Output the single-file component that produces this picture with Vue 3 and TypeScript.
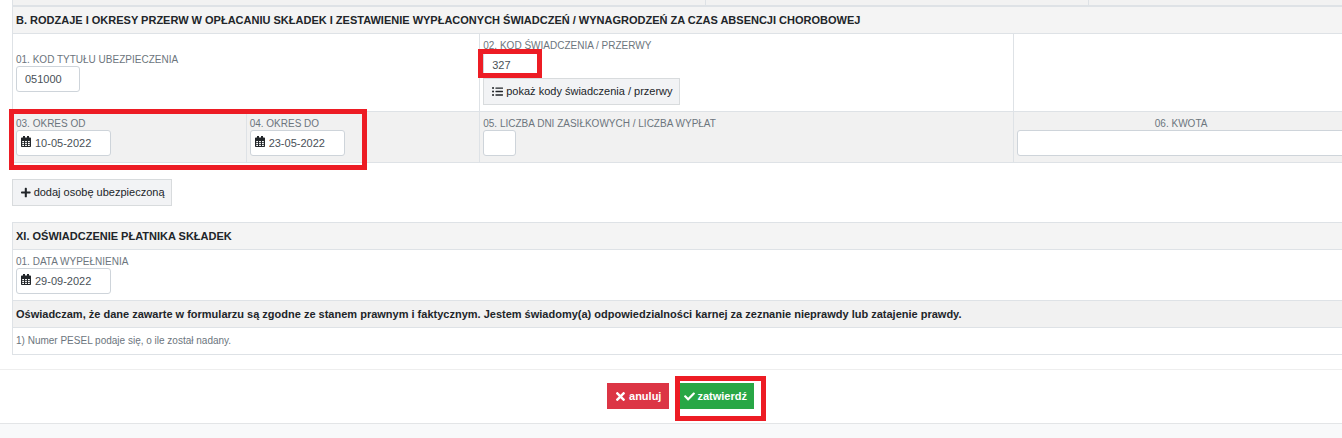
<script setup lang="ts">
import { ref } from 'vue'

const insuranceCode = ref('051000')
const benefitCode = ref('327')
const periodFrom = ref('10-05-2022')
const periodTo = ref('23-05-2022')
const dayCount = ref('')
const amount = ref('')
const filledOn = ref('29-09-2022')

const icons = {
  calendar:
    'M2 0h2v1.500h2V0h2v1.500h1.200a.8.8 0 0 1 .8.800V4H0V2.300a.8.8 0 0 1 .8-.800H2zM0 4h10v6.200a.8.8 0 0 1-.8.800H.8a.8.8 0 0 1-.8-.800zM1.200 5v1.300h1.800V5zM4.100 5v1.300h1.800V5zM7 5v1.300h1.800V5zM1.200 7v1.200h1.800V7zM4.100 7v1.200h1.800V7zM7 7v1.200h1.800V7zM1.200 9v1h1.800V9zM4.100 9v1h1.800V9zM7 9v1h1.800V9z',
  list:
    'M48 48a48 48 0 1 0 48 48 48 48 0 0 0-48-48zm0 160a48 48 0 1 0 48 48 48 48 0 0 0-48-48zm0 160a48 48 0 1 0 48 48 48 48 0 0 0-48-48zm448 16H176a16 16 0 0 0-16 16v32a16 16 0 0 0 16 16h320a16 16 0 0 0 16-16v-32a16 16 0 0 0-16-16zm0-320H176a16 16 0 0 0-16 16v32a16 16 0 0 0 16 16h320a16 16 0 0 0 16-16V80a16 16 0 0 0-16-16zm0 160H176a16 16 0 0 0-16 16v32a16 16 0 0 0 16 16h320a16 16 0 0 0 16-16v-32a16 16 0 0 0-16-16z',
  plus:
    'M416 208H272V64c0-17.670-14.330-32-32-32h-32c-17.670 0-32 14.330-32 32v144H32c-17.670 0-32 14.330-32 32v32c0 17.670 14.330 32 32 32h144v144c0 17.670 14.330 32 32 32h32c17.670 0 32-14.330 32-32V304h144c17.670 0 32-14.330 32-32v-32c0-17.670-14.330-32-32-32z',
  cross:
    'M242.720 256l100.070-100.070c12.280-12.280 12.280-32.190 0-44.480l-22.240-22.240c-12.280-12.280-32.190-12.280-44.480 0L176 189.280 75.930 89.210c-12.280-12.280-32.190-12.280-44.480 0L9.210 111.450c-12.280 12.280-12.280 32.190 0 44.480L109.280 256 9.210 356.070c-12.280 12.280-12.280 32.190 0 44.480l22.240 22.240c12.280 12.280 32.200 12.280 44.480 0L176 322.720l100.070 100.070c12.280 12.280 32.200 12.280 44.480 0l22.240-22.240c12.280-12.280 12.280-32.190 0-44.480L242.720 256z',
  check:
    'M173.898 439.404l-166.400-166.400c-9.997-9.997-9.997-26.206 0-36.204l36.203-36.204c9.997-9.998 26.207-9.998 36.204 0L192 312.690 432.095 72.596c9.997-9.997 26.207-9.997 36.204 0l36.203 36.204c9.997 9.997 9.997 26.206 0 36.204l-294.400 294.401c-9.998 9.997-26.207 9.997-36.204-.001z',
}
</script>

<template>
  <div class="page">
    <form class="sheet" @submit.prevent>
      <div class="content">
        <div class="strip"><span></span><span></span><span></span></div>

        <section class="panel first">
          <h2 class="heading">
            B. RODZAJE I OKRESY PRZERW W OPŁACANIU SKŁADEK I ZESTAWIENIE WYPŁACONYCH ŚWIADCZEŃ / WYNAGRODZEŃ ZA CZAS
            ABSENCJI CHOROBOWEJ
          </h2>
          <div class="row codes">
            <div class="cell">
              <label for="insurance-code">01. KOD TYTUŁU UBEZPIECZENIA</label>
              <input id="insurance-code" v-model="insuranceCode" class="field code" type="text" />
            </div>
            <div class="cell">
              <label for="benefit-code">02. KOD ŚWIADCZENIA / PRZERWY</label>
              <div class="marked">
                <input id="benefit-code" v-model="benefitCode" class="field short" type="text" />
                <span class="mark mark-code"></span>
              </div>
              <button class="button light" type="button">
                <svg class="icon" viewBox="0 0 512 512"><path :d="icons.list" /></svg>pokaż kody świadczenia /
                przerwy
              </button>
            </div>
            <div class="cell"></div>
          </div>
          <div class="row periods shaded">
            <div class="cell">
              <label for="period-from">03. OKRES OD</label>
              <div class="field date">
                <svg class="icon" viewBox="0 0 10 11"><path fill-rule="evenodd" :d="icons.calendar" /></svg>
                <input id="period-from" v-model="periodFrom" type="text" />
              </div>
              <span class="mark mark-period"></span>
            </div>
            <div class="cell">
              <label for="period-to">04. OKRES DO</label>
              <div class="field date">
                <svg class="icon" viewBox="0 0 10 11"><path fill-rule="evenodd" :d="icons.calendar" /></svg>
                <input id="period-to" v-model="periodTo" type="text" />
              </div>
            </div>
            <div class="cell">
              <label for="day-count">05. LICZBA DNI ZASIŁKOWYCH / LICZBA WYPŁAT</label>
              <input id="day-count" v-model="dayCount" class="field days" type="text" />
            </div>
            <div class="cell amount">
              <label for="amount">06. KWOTA</label>
              <input id="amount" v-model="amount" class="field" type="text" />
            </div>
          </div>
        </section>

        <button class="button light add" type="button">
          <svg class="icon" viewBox="0 0 448 512"><path :d="icons.plus" /></svg>dodaj osobę ubezpieczoną
        </button>

        <section class="panel second">
          <h2 class="heading">XI. OŚWIADCZENIE PŁATNIKA SKŁADEK</h2>
          <div class="row">
            <div class="cell">
              <label for="filled-on">01. DATA WYPEŁNIENIA</label>
              <div class="field date">
                <svg class="icon" viewBox="0 0 10 11"><path fill-rule="evenodd" :d="icons.calendar" /></svg>
                <input id="filled-on" v-model="filledOn" type="text" />
              </div>
            </div>
          </div>
          <p class="statement">
            Oświadczam, że dane zawarte w formularzu są zgodne ze stanem prawnym i faktycznym. Jestem świadomy(a)
            odpowiedzialności karnej za zeznanie nieprawdy lub zatajenie prawdy.
          </p>
          <p class="note">1) Numer PESEL podaje się, o ile został nadany.</p>
        </section>
      </div>

      <div class="actions">
        <button class="button cancel" type="button">
          <svg class="icon" viewBox="0 0 352 512"><path :d="icons.cross" /></svg>anuluj
        </button>
        <div class="marked">
          <button class="button confirm" type="submit">
            <svg class="icon" viewBox="0 0 512 512"><path :d="icons.check" /></svg>zatwierdź
          </button>
          <span class="mark mark-confirm"></span>
        </div>
      </div>
      <footer class="footer"></footer>
    </form>
  </div>
</template>

<style>
body {
  margin: 0;
  background: #fff;
}
</style>

<style scoped>
* {
  box-sizing: border-box;
}

.page {
  display: flex;
  min-height: 100vh;
  overflow: hidden;
  font-family: 'Liberation Sans', Arial, sans-serif;
  font-size: 11px;
  color: #212529;
}

/* The form is slightly wider than the window and runs off its right edge. */
.sheet {
  display: flex;
  flex: none;
  flex-direction: column;
  width: calc(100% + 19px);
}

.content {
  padding: 0 12px 14px;
}

.strip {
  display: grid;
  grid-template-columns: 693fr 383fr 261fr;
  height: 5px;
  border-left: 1px solid #dee2e6;
  background: #f2f2f2;
}

.strip span + span {
  border-left: 1px solid #dee2e6;
}

.panel {
  border: 1px solid #dee2e6;
  border-bottom: 0;
}

.first {
  border-top-width: 2px;
}

.heading,
.statement,
.note {
  margin: 0;
  padding: 0 3px;
  border-bottom: 1px solid #dee2e6;
  line-height: 26px;
  white-space: nowrap;
}

.heading,
.statement {
  background: #f4f4f4;
  font-size: 11px;
  font-weight: bold;
}

.statement,
.shaded {
  background: #f1f1f1;
}

.note {
  font-size: 10px;
  color: #6c757d;
}

.row {
  display: grid;
  border-bottom: 1px solid #dee2e6;
}

.codes {
  grid-template-columns: 14fr 16fr 10fr;
}

.periods {
  grid-template-columns: 7fr 7fr 16fr 10fr;
}

.cell {
  position: relative;
  display: flex;
  flex-direction: column;
  align-items: flex-start;
  justify-content: center;
  min-width: 0;
  padding: 5px 3px 6px;
}

.cell:not(:last-child) {
  border-right: 1px solid #dee2e6;
}

label {
  font-size: 10px;
  line-height: 13px;
  color: #6c757d;
  white-space: nowrap;
}

input {
  margin: 0;
  font: inherit;
  color: #495057;
  outline: 0;
}

.field {
  height: 26px;
  padding: 0 8px;
  border: 1px solid #ced4da;
  border-radius: 3px;
  background: #fff;
}

.code {
  width: 64px;
}

.short {
  display: block;
  width: 55px;
}

.days {
  width: 33px;
}

.date {
  display: flex;
  align-items: flex-start;
  gap: 4px;
  width: 95px;
  padding: 5px 4px 0;
}

.date input {
  flex: 1;
  min-width: 0;
  height: 14px;
  padding: 0;
  border: 0;
  background: none;
}

.amount {
  align-items: stretch;
}

.amount label {
  text-align: center;
}

.icon {
  flex: none;
  height: 11px;
  fill: currentColor;
}

.button {
  display: flex;
  align-items: center;
  gap: 4px;
  margin: 0;
  padding: 0 8px 0 9px;
  border: 0;
  font: inherit;
  line-height: 26px;
  color: #fff;
  white-space: nowrap;
}

.light {
  gap: 3px;
  padding: 0 6px 0 8px;
  border: 1px solid #d8dbdd;
  background: #f2f3f5;
  line-height: 25px;
  color: #212529;
}

.add {
  margin: 16px 0;
}

.actions {
  display: flex;
  justify-content: center;
  gap: 6px;
  padding: 13px 0 14px;
  border-top: 1px solid #eee;
}

.actions .button {
  font-weight: bold;
}

.cancel {
  background: #dc3545;
}

.cancel .icon {
  height: 13px;
}

.button.confirm {
  gap: 2px;
  padding-right: 7px;
  background: #28a745;
}

.footer {
  flex: 1;
  min-height: 15px;
  border-top: 1px solid #e3e5e7;
  background: #f8f9fa;
}

.marked {
  position: relative;
}

.mark {
  position: absolute;
  z-index: 1;
  border: 5px solid #ed1c24;
  pointer-events: none;
}

.mark-code {
  inset: -3px -4px 0 -5px;
}

.mark-period {
  top: -3px;
  left: -4px;
  width: 358px;
  height: 61px;
}

.mark-confirm {
  inset: -7px -12px -12px 0;
}
</style>
